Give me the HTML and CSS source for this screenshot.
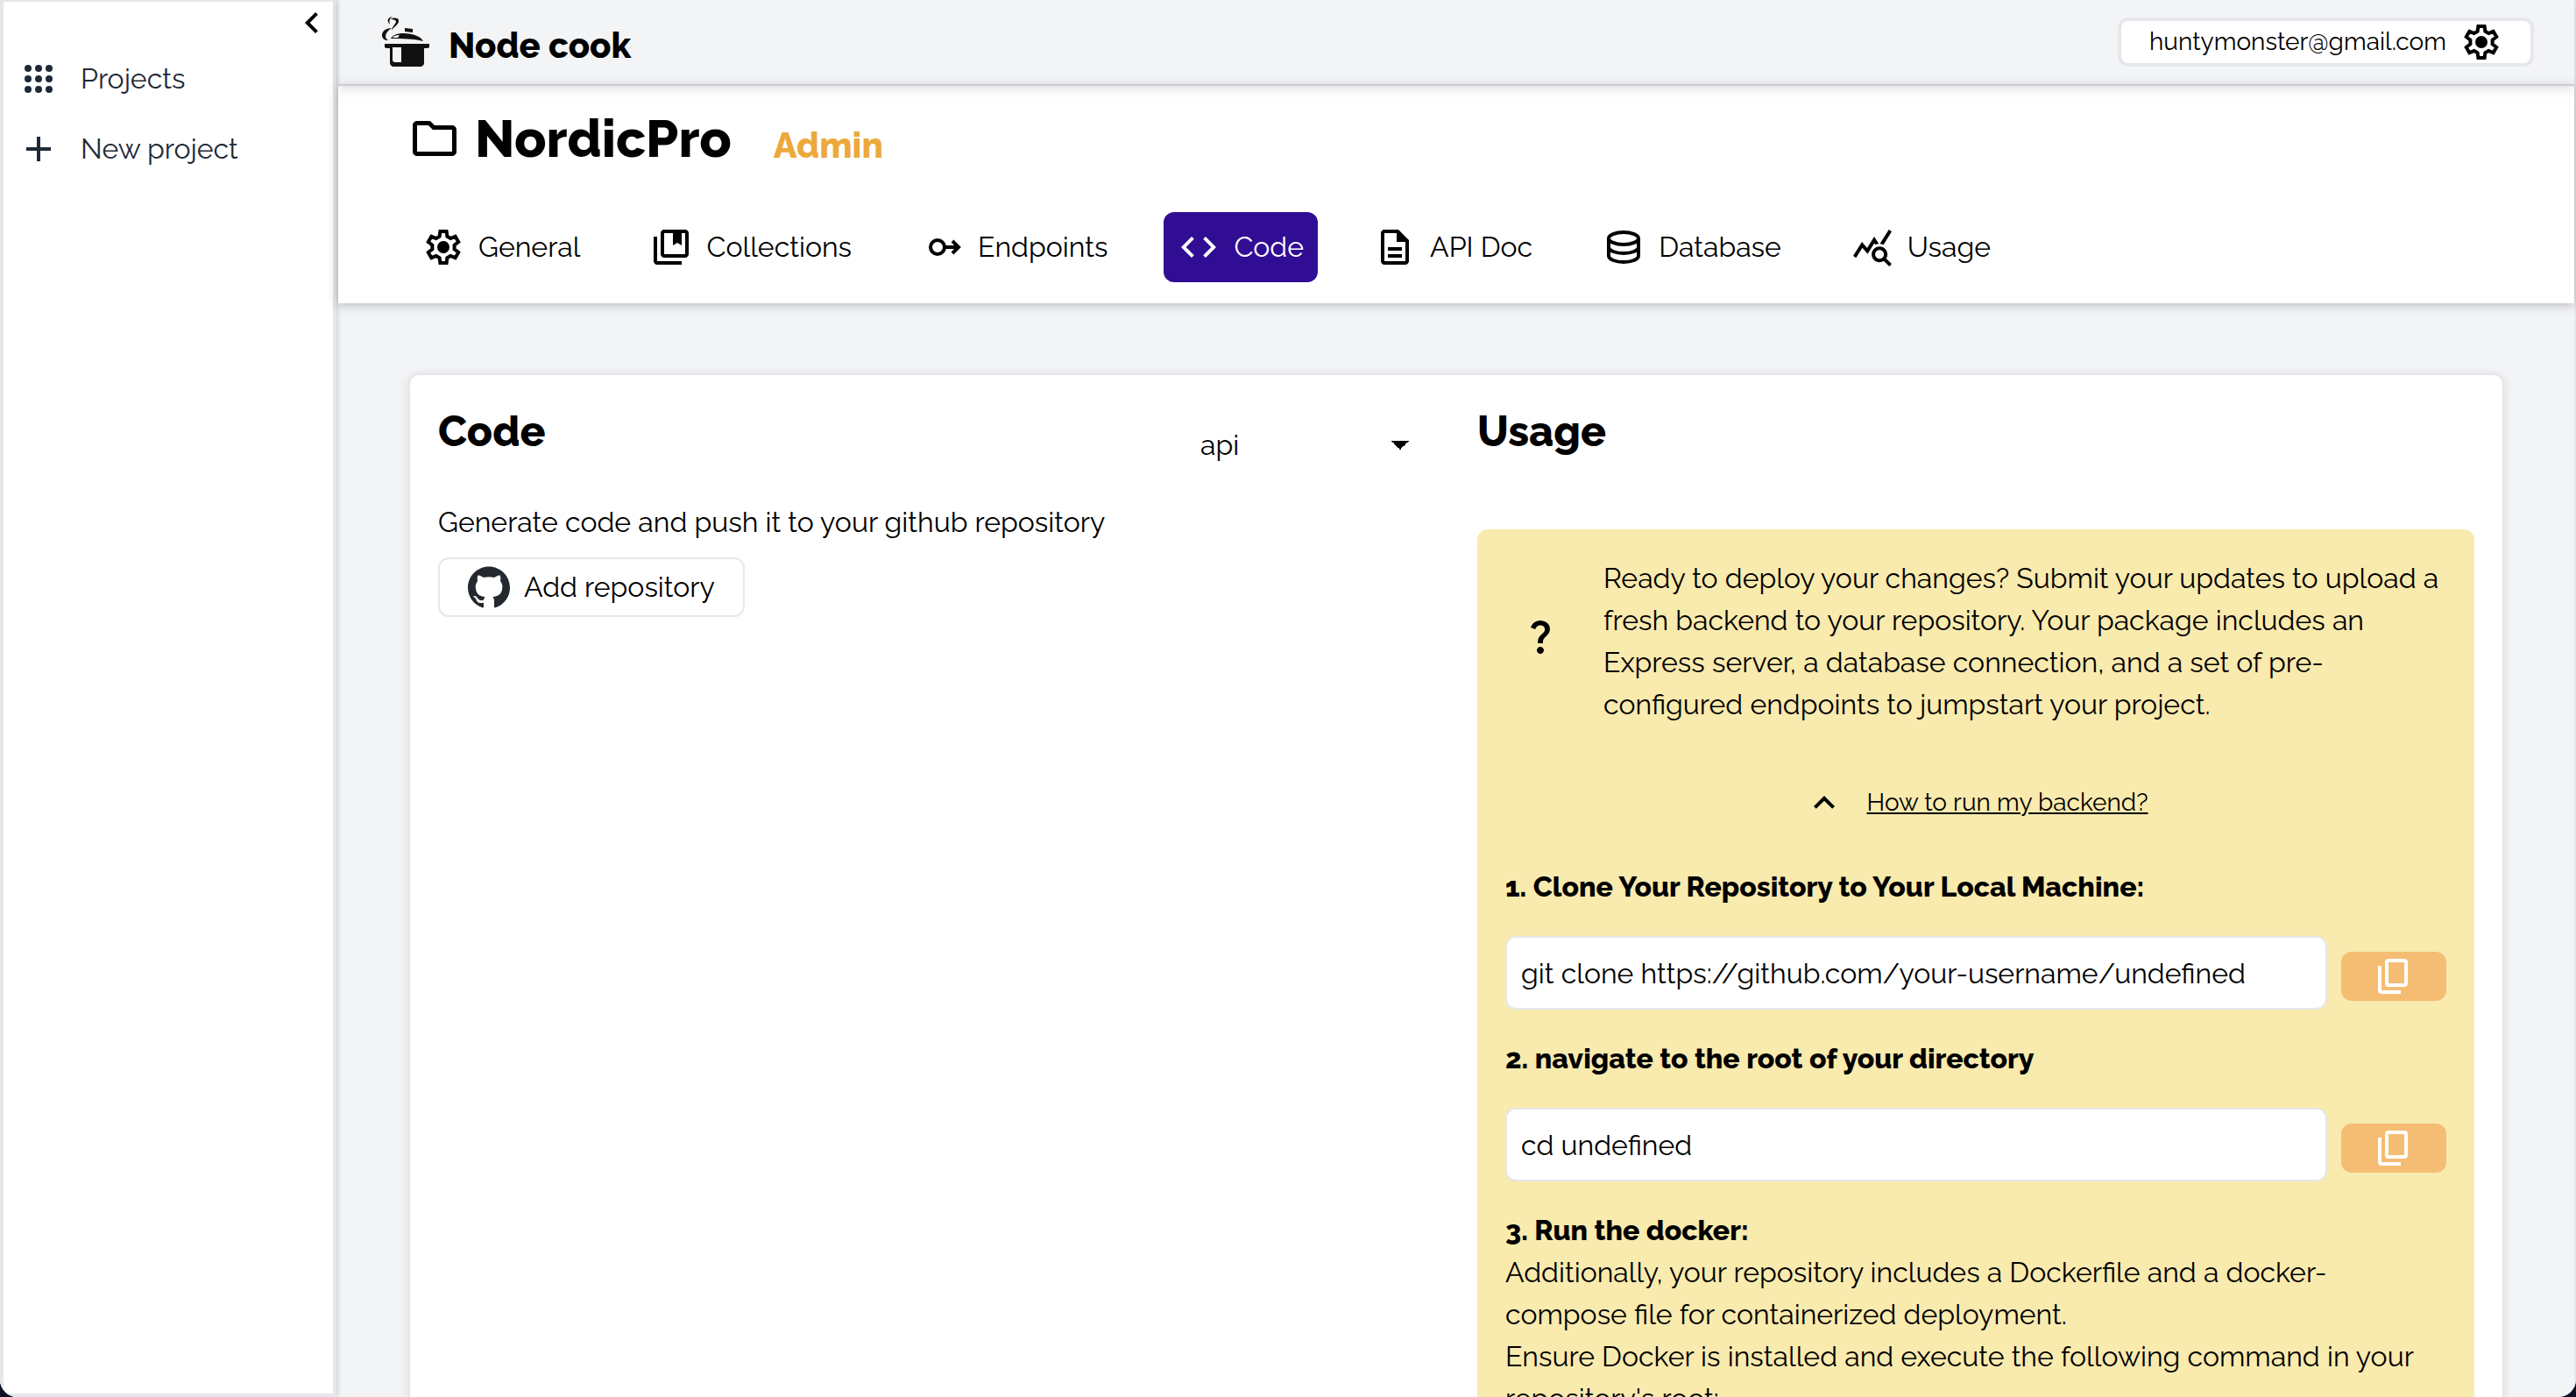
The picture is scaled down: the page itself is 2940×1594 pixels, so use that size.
FILE: index.html
```html
<!DOCTYPE html>
<html lang="en">
<head>
<meta charset="utf-8">
<title>Node cook</title>
<link rel="stylesheet" href="styles.css">
</head>
<body>
<svg class="sprite" aria-hidden="true">
  <symbol id="gear" viewBox="0 0 24 24">
    <path fill="none" stroke="currentColor" stroke-width="2" d="M10.2 3h3.6l.4 2.9 1.9 1.1 2.7-1.1 1.8 3.1-2.3 1.8v2.4l2.3 1.8-1.8 3.1-2.7-1.1-1.9 1.1-.4 2.9h-3.6l-.4-2.9-1.9-1.1-2.7 1.1L3.400 15l2.300-1.800v-2.400L3.400 9l1.800-3.100 2.700 1.100 1.900-1.100z"/>
    <circle cx="12" cy="12" r="3.500" fill="currentColor"/>
  </symbol>
  <symbol id="copy" viewBox="0 0 24 24">
    <g fill="none" stroke="currentColor" stroke-width="2"><rect x="8" y="3" width="11" height="14" rx="1"/><path d="M4 6v14q0 1 1 1h11"/></g>
  </symbol>
</svg>
<div class="app">
  <aside class="sidebar">
    <button class="collapse" aria-label="Collapse sidebar"><svg class="icon" viewBox="0 0 24 24"><path fill="currentColor" d="M15.410 7.410 14 6l-6 6 6 6 1.410-1.410L10.830 12z"/></svg></button>
    <nav class="side-nav">
      <a class="side-link" href="#projects"><svg class="icon" viewBox="0 0 24 24" fill="currentColor"><circle cx="6" cy="6" r="2"/><circle cx="12" cy="6" r="2"/><circle cx="18" cy="6" r="2"/><circle cx="6" cy="12" r="2"/><circle cx="12" cy="12" r="2"/><circle cx="18" cy="12" r="2"/><circle cx="6" cy="18" r="2"/><circle cx="12" cy="18" r="2"/><circle cx="18" cy="18" r="2"/></svg>Projects</a>
      <a class="side-link" href="#new"><svg class="icon" viewBox="0 0 24 24"><path fill="currentColor" d="M19 13h-6v6h-2v-6H5v-2h6V5h2v6h6z"/></svg>New project</a>
    </nav>
  </aside>
  <div class="main">
    <header class="topbar">
      <a class="brand" href="#home">
        <svg class="logo" viewBox="0 0 56 60" fill="#111">
          <path d="M14 1C8 2 7 6 11 10c-1-4-1-6 3-9z"/>
          <path d="M12 4c3-2 8-2 9 1 1 5-7 8-8 12 0-4 4-7 5-10 0-2-2-3-6-3z"/>
          <path d="M13 14C6 14 2 18 2 22c0 4 3 6 7 6-6-4-2-10 4-14z"/>
          <path d="m28 14 9 1v4l-9-1z"/>
          <path d="M12 26c2-4 8-6 14-6 12 0 21 4 23 9-12-3-24-3-37-3z"/>
          <path fill="#f3f4f6" d="M14 25c1-2 4-3 8-3-1 1-1 2-2 3z"/>
          <path d="M5 32h51v3c0 2-2 2-6 2v17c0 2-2 4-4 4H15c-2 0-4-2-4-4V37c-4 0-6 0-6-2z"/>
          <path fill="#f3f4f6" d="M14 36h10v17h-7c-2 0-3-1-3-3z"/>
        </svg>
        <span>Node cook</span>
      </a>
      <button class="account"><span>huntymonster@gmail.com</span><svg class="icon"><use href="#gear"/></svg></button>
    </header>
    <section class="project">
      <div class="project-head">
        <svg class="icon folder" viewBox="0 0 24 24"><path fill="currentColor" d="m9.170 6 2 2H20v10H4V6zM10 4H4c-1.100 0-1.990.9-1.990 2L2 18c0 1.100.9 2 2 2h16c1.100 0 2-.9 2-2V8c0-1.100-.9-2-2-2h-8z"/></svg>
        <h1>NordicPro</h1>
        <span class="role">Admin</span>
      </div>
      <nav class="tabs">
        <a class="tab" href="#general"><svg class="icon"><use href="#gear"/></svg>General</a>
        <a class="tab" href="#collections"><svg class="icon" viewBox="0 0 24 24" fill="currentColor"><path d="M4 6H2v14c0 1.100.9 2 2 2h14v-2H4z"/><path fill-rule="evenodd" d="M20 2H8c-1.100 0-2 .9-2 2v12c0 1.100.9 2 2 2h12c1.100 0 2-.9 2-2V4c0-1.100-.9-2-2-2zm0 14H8V4h12z"/><path d="M13 4h5v7l-2.500-1.500L13 11z"/></svg>Collections</a>
        <a class="tab" href="#endpoints"><svg class="icon" viewBox="0 0 24 24" fill="none" stroke="currentColor" stroke-width="2"><circle cx="9" cy="12" r="4"/><path d="M13 12h8M17.500 8.500 21 12l-3.500 3.500"/></svg>Endpoints</a>
        <a class="tab active" href="#code" aria-current="page"><svg class="icon" viewBox="0 0 24 24"><path fill="currentColor" d="M9.400 16.600 4.800 12l4.600-4.600L8 6l-6 6 6 6zm5.200 0 4.600-4.600-4.600-4.600L16 6l6 6-6 6z"/></svg>Code</a>
        <a class="tab" href="#doc"><svg class="icon" viewBox="0 0 24 24"><path fill="currentColor" d="M8 16h8v2H8zm0-4h8v2H8zm6-10H6c-1.100 0-2 .9-2 2v16c0 1.100.890 2 1.990 2H18c1.100 0 2-.9 2-2V8zm4 18H6V4h7v5h5z"/></svg>API Doc</a>
        <a class="tab" href="#database"><svg class="icon" viewBox="0 0 24 24" fill="none" stroke="currentColor" stroke-width="2"><ellipse cx="12" cy="7" rx="8.500" ry="3.500"/><path d="M3.500 7v10c0 2 4 3.500 8.500 3.500s8.500-1.500 8.500-3.500V7M3.500 12c0 2 4 3.500 8.500 3.500s8.500-1.500 8.500-3.500"/></svg>Database</a>
        <a class="tab" href="#usage"><svg class="icon" viewBox="0 0 24 24"><path fill="currentColor" d="M19.880 18.470c.440-.7.700-1.510.7-2.390 0-2.490-2.010-4.500-4.500-4.500s-4.500 2.010-4.500 4.500 2.010 4.500 4.490 4.500c.880 0 1.700-.260 2.390-.7L21.580 23 23 21.580zm-3.800.110c-1.380 0-2.500-1.120-2.500-2.500s1.120-2.500 2.500-2.500 2.500 1.120 2.500 2.500-1.120 2.500-2.500 2.500zm-.360-8.500c-.740.020-1.450.180-2.100.450l-.550-.830-3.800 6.180-3.010-3.520-3.630 5.810L1 17l5-8 3 3.500L13 6zm2.590.5c-.640-.280-1.330-.450-2.050-.490L21.380 2 23 3.180z"/></svg>Usage</a>
      </nav>
    </section>
    <main class="content">
      <div class="card">
        <section class="column">
          <div class="column-head">
            <h2>Code</h2>
            <select class="kind" aria-label="Code type"><option>api</option></select>
          </div>
          <p>Generate code and push it to your github repository</p>
          <button class="repo"><svg class="icon" viewBox="0 0 16 16"><path fill="#24292f" d="M8 .2C3.600.2 0 3.800 0 8.200c0 3.540 2.290 6.530 5.470 7.590.4.070.550-.170.550-.380 0-.190-.010-.820-.010-1.490-2.010.370-2.530-.490-2.690-.940-.090-.230-.480-.940-.820-1.130-.280-.150-.680-.520-.010-.530.630-.010 1.080.580 1.230.820.720 1.210 1.870.870 2.330.660.070-.520.280-.870.510-1.070-1.780-.2-3.640-.890-3.640-3.950 0-.870.310-1.590.820-2.150-.080-.2-.360-1.020.080-2.120 0 0 .670-.210 2.200.820.640-.180 1.320-.270 2-.270s1.360.090 2 .270c1.530-1.040 2.200-.820 2.200-.820.440 1.100.160 1.920.080 2.120.510.560.820 1.270.820 2.150 0 3.070-1.870 3.750-3.650 3.950.290.250.540.730.540 1.480 0 1.070-.010 1.930-.010 2.200 0 .210.150.460.550.380A8.010 8.010 0 0 0 16 8.200C16 3.800 12.400.2 8 .2z"/></svg>Add repository</button>
        </section>
        <section class="column">
          <div class="column-head"><h2>Usage</h2></div>
          <div class="guide">
            <div class="intro">
              <svg class="icon question" viewBox="0 0 24 24"><path fill="currentColor" d="M11.070 12.850c.770-1.390 2.250-2.210 3.110-3.440.910-1.290.4-3.700-2.180-3.700-1.690 0-2.520 1.280-2.870 2.340L6.540 6.960C7.250 4.830 9.180 3 11.990 3c2.350 0 3.960 1.070 4.780 2.410.7 1.150 1.110 3.300.030 4.900-1.200 1.770-2.350 2.310-2.970 3.450-.250.460-.350.760-.350 2.240h-2.890c-.010-.780-.130-2.050.480-3.150zM14 20c0 1.100-.9 2-2 2s-2-.9-2-2 .9-2 2-2 2 .9 2 2z"/></svg>
              <p>Ready to deploy your changes? Submit your updates to upload a fresh backend to your repository. Your package includes an Express server, a database connection, and a set of pre-configured endpoints to jumpstart your project.</p>
            </div>
            <button class="toggle" aria-expanded="true"><svg class="icon" viewBox="0 0 24 24"><path fill="currentColor" d="m12 8-6 6 1.410 1.410L12 10.830l4.590 4.580L18 14z"/></svg><span>How to run my backend?</span></button>
            <h3><label for="clone">1. Clone Your Repository to Your Local Machine:</label></h3>
            <div class="command"><input id="clone" readonly value="git clone https://github.com/your-username/undefined"><button class="copy" aria-label="Copy clone command"><svg class="icon"><use href="#copy"/></svg></button></div>
            <h3><label for="cd">2. navigate to the root of your directory</label></h3>
            <div class="command"><input id="cd" readonly value="cd undefined"><button class="copy" aria-label="Copy directory command"><svg class="icon"><use href="#copy"/></svg></button></div>
            <h3>3. Run the docker:</h3>
            <p>Additionally, your repository includes a Dockerfile and a docker-compose file for containerized deployment.</p>
            <p>Ensure Docker is installed and execute the following command in your repository's root:</p>
          </div>
        </section>
      </div>
    </main>
  </div>
</div>
</body>
</html>
```
FILE: styles.css
```css
* { box-sizing: border-box; }

body {
  margin: 0;
  background: #0b1220;
  color: #000;
  font: 32px/48px Raleway, Lato, sans-serif;
}

h1, h2, h3, p { margin: 0; }
a { color: inherit; text-decoration: none; }
button, input, select { font: inherit; color: inherit; }
button { border: 0; padding: 0; background: none; display: flex; align-items: center; }

.sprite { display: none; }
.icon { flex: none; width: 48px; height: 48px; display: block; }

.app {
  display: flex;
  height: 100vh;
  overflow: hidden;
  background: #f3f4f6;
  border-radius: 0 0 20px 20px;
}

.sidebar {
  flex: none;
  width: 384px;
  border: 4px solid #e5e7eb;
  border-top-width: 2px;
  background: #fff;
  box-shadow: 2px 0 4px #d1d5db;
}
.collapse { margin-left: auto; }
.side-link {
  display: flex;
  align-items: center;
  gap: 24px;
  height: 80px;
  padding-left: 16px;
  color: #1f2937;
}

.main {
  flex: 1;
  min-width: 0;
  margin-left: 2px;
  border-right: 2px solid #e5e7eb;
  display: flex;
  flex-direction: column;
}

.topbar {
  position: relative;
  flex: none;
  display: flex;
  justify-content: space-between;
  align-items: center;
  height: 98px;
  padding: 0 46px 0 48px;
  border-bottom: 2px solid #c9cad3;
  box-shadow: 0 4px 12px rgba(0, 0, 0, .12);
}
.brand {
  display: flex;
  align-items: center;
  gap: 22px;
  font-size: 40px;
  font-weight: 800;
}
.brand span { padding-top: 8px; }
.logo { width: 56px; height: 60px; }
.account {
  gap: 16px;
  height: 56px;
  padding: 0 32px;
  border: 4px solid #e5e7eb;
  border-radius: 12px;
  background: #fff;
  font-size: 28px;
}

.project {
  flex: none;
  padding: 24px 80px;
  background: #fff;
  box-shadow: 0 2px 12px rgba(0, 0, 0, .25);
}
.project-head {
  display: flex;
  align-items: center;
  height: 72px;
  margin-bottom: 48px;
}
.folder { width: 60px; height: 60px; }
h1 { margin: 0 48px 0 16px; font-size: 60px; font-weight: 800; }
.role { padding-top: 16px; font-size: 40px; font-weight: 800; color: #eca93b; }

.tabs { display: flex; gap: 48px; }
.tab {
  display: flex;
  align-items: center;
  gap: 16px;
  height: 80px;
  padding: 0 16px;
  border-radius: 12px;
}
.tab.active { background: #310d93; color: #fff; }

.content {
  flex: 1;
  min-height: 0;
  overflow-y: auto;
  scrollbar-width: none;
  padding: 80px 80px 0;
}
.card {
  display: grid;
  grid-template-columns: 1fr 1fr;
  gap: 48px;
  padding: 32px;
  border: 2px solid #e5e7eb;
  border-radius: 12px;
  background: #fff;
  box-shadow: 0 2px 12px rgba(0, 0, 0, .1);
}
.column-head {
  display: flex;
  justify-content: space-between;
  height: 112px;
}
h2 { font-size: 48px; line-height: 64px; font-weight: 800; }
.kind {
  appearance: none;
  width: 284px;
  height: 96px;
  padding: 0 16px;
  border: 0;
  background:
    linear-gradient(to bottom right, #000 50%, transparent 50%) right 30px center / 10px 10px no-repeat,
    linear-gradient(to bottom left, #000 50%, transparent 50%) right 40px center / 10px 10px no-repeat;
}
.repo {
  gap: 16px;
  height: 68px;
  margin-top: 16px;
  padding: 0 32px;
  border: 2px solid #e5e7eb;
  border-radius: 12px;
}

.guide {
  margin-top: 32px;
  padding: 32px;
  border-radius: 12px;
  background: #f9eaae;
}
.intro { display: flex; align-items: center; gap: 48px; padding-left: 16px; }
.question { margin-bottom: 12px; }
.toggle { gap: 24px; margin: 64px auto 48px; font-size: 28px; text-decoration: underline; }
h3 { font-size: 32px; font-weight: 800; }
.command {
  display: flex;
  align-items: center;
  gap: 16px;
  margin: 32px 0;
}
.command input {
  flex: 1;
  min-width: 0;
  height: 84px;
  padding: 0 16px;
  border: 2px solid #e5e7eb;
  border-radius: 12px;
  background: #fff;
}
.copy {
  justify-content: center;
  width: 120px;
  height: 56px;
  margin-top: 8px;
  border-radius: 12px;
  background: #f5bd73;
  color: #fff;
}
```
